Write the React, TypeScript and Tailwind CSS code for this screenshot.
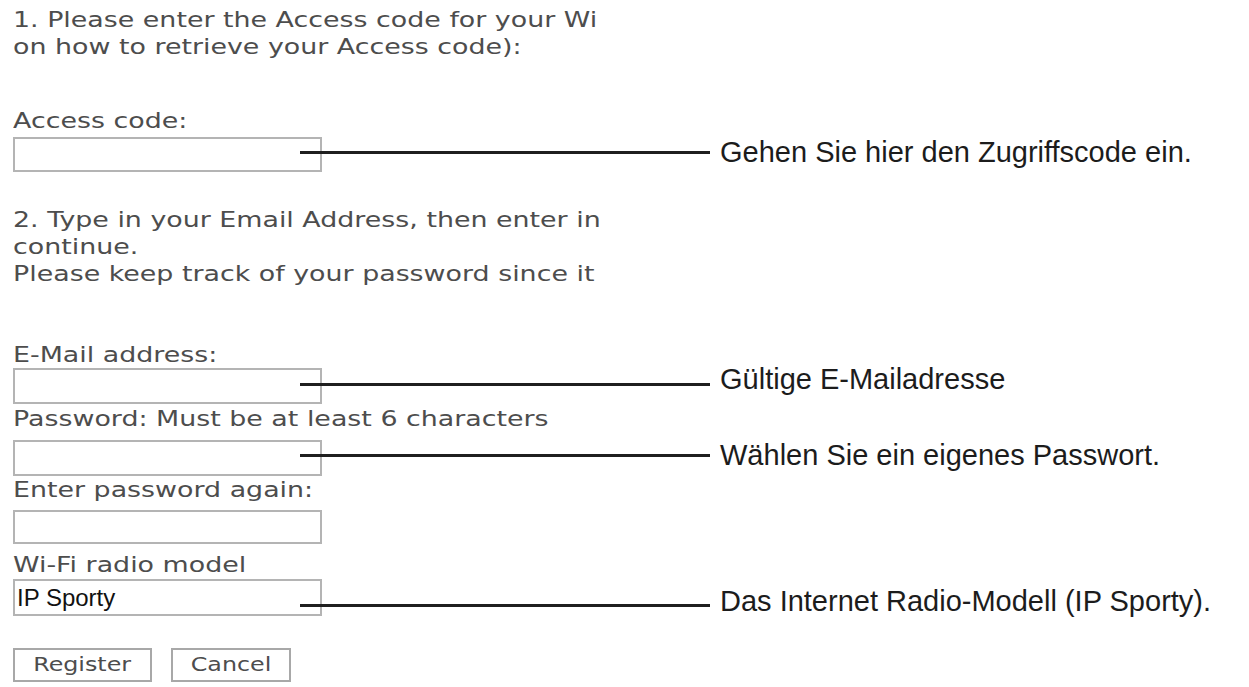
import React from 'react'

const BOX = 'w-[309px] h-full shrink-0 border-2 border-[#b4b4b4] bg-white'

// The screenshot in the reference is stretched sideways, so the page text is widened.
function Line({ children, className = '' }: { children: React.ReactNode; className?: string }) {
  return (
    <div className={`h-[27px] leading-[27px] whitespace-nowrap ${className}`}>
      <span className="inline-block origin-left scale-x-[1.31]">{children}</span>
    </div>
  )
}

function Callout({ text, offset, textShift = '' }: { text: string; offset: string; textShift?: string }) {
  return (
    <div className={`flex items-center -ml-[22px] h-[34px] ${offset}`}>
      <div className="w-[410px] h-[3px] bg-[#1f1f1f]" />
      <span
        className={`ml-[10px] whitespace-nowrap text-[29px] leading-[34px] text-[#1c1c1c] font-['Liberation_Sans',Arial,sans-serif] ${textShift}`}
      >
        {text}
      </span>
    </div>
  )
}

export default function App() {
  return (
    <div className="w-[1249px] h-[687px] bg-white overflow-hidden pl-[13px] pt-[7px] text-[20.5px] text-[#4d4d4d] font-['DejaVu_Sans',Verdana,sans-serif]">
      {/* Step 1 */}
      <Line>1. Please enter the Access code for your Wi</Line>
      <Line>on how to retrieve your Access code):</Line>

      <Line className="mt-[47px]">Access code:</Line>
      <div className="flex h-[35px] mt-[2px]">
        <div className={BOX} />
        <Callout text="Gehen Sie hier den Zugriffscode ein." offset="-mt-[2px]" />
      </div>

      {/* Step 2 */}
      <Line className="mt-[35px]">2. Type in your Email Address, then enter in</Line>
      <Line>continue.</Line>
      <Line>Please keep track of your password since it</Line>

      <Line className="mt-[54px]">E-Mail address:</Line>
      <div className="flex h-[36px] -mt-[1px]">
        <div className={BOX} />
        <Callout text="Gültige E-Mailadresse" offset="-mt-[1px]" textShift="-mt-[10px]" />
      </div>

      <Line className="mt-[2px]">Password: Must be at least 6 characters</Line>
      <div className="flex h-[36px] mt-[7px]">
        <div className={BOX} />
        <Callout text="Wählen Sie ein eigenes Passwort." offset="-mt-[2px]" />
      </div>

      <Line className="mt-[1px]">Enter password again:</Line>
      <div className="flex h-[34px] mt-[6px]">
        <div className={BOX} />
      </div>

      <Line className="mt-[8px]">Wi-Fi radio model</Line>
      <div className="flex h-[37px]">
        <div className={`${BOX} flex items-center pl-[2px]`}>
          <span className="text-[24px] leading-none text-[#111] font-['Liberation_Sans',Arial,sans-serif]">
            IP Sporty
          </span>
        </div>
        <Callout text="Das Internet Radio-Modell (IP Sporty)." offset="mt-[9px]" textShift="-mt-[8px]" />
      </div>

      {/* Buttons */}
      <div className="flex gap-[19px] mt-[32px]">
        <button className="w-[139px] h-[34px] border-2 border-[#a8a8a8] bg-white text-[19.5px] leading-none text-[#4d4d4d]">
          <span className="inline-block scale-x-[1.22]">Register</span>
        </button>
        <button className="w-[120px] h-[34px] border-2 border-[#a8a8a8] bg-white text-[19.5px] leading-none text-[#4d4d4d]">
          <span className="inline-block scale-x-[1.22]">Cancel</span>
        </button>
      </div>
    </div>
  )
}
